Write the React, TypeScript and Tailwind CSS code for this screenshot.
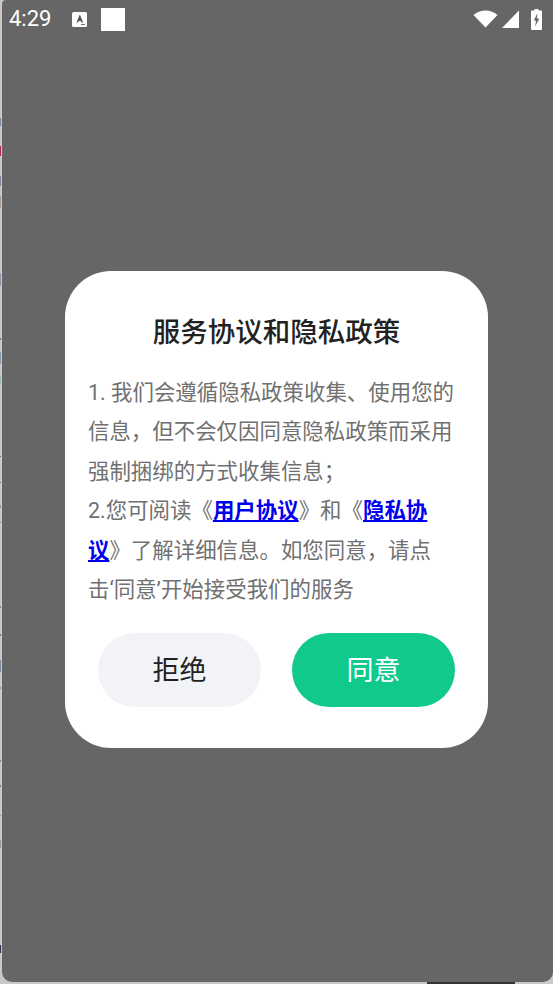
const specks = [
  { top: 118, h: 8, color: "#7d8ba0" },
  { top: 146, h: 10, color: "#b0274d" },
  { top: 176, h: 10, color: "#8a889c" },
  { top: 196, h: 12, color: "#a89c90" },
  { top: 273, h: 13, color: "#8d99a8" },
  { top: 338, h: 2, color: "#777777" },
  { top: 352, h: 12, color: "#8a9ab5" },
  { top: 376, h: 8, color: "#a0b5aa" },
  { top: 456, h: 1, color: "#666666" },
  { top: 482, h: 1, color: "#666666" },
  { top: 505, h: 3, color: "#999999" },
  { top: 522, h: 1, color: "#888888" },
  { top: 606, h: 2, color: "#888888" },
  { top: 634, h: 2, color: "#777777" },
  { top: 660, h: 12, color: "#7d8ba0" },
  { top: 687, h: 2, color: "#999999" },
  { top: 760, h: 2, color: "#888888" },
  { top: 785, h: 2, color: "#777777" },
  { top: 815, h: 1, color: "#999999" },
  { top: 840, h: 8, color: "#999999" },
  { top: 945, h: 8, color: "#2d3348" },
];

export default function App() {
  return (
    <div
      className="relative w-[553px] h-[984px] overflow-hidden bg-[#c9c9c9]"
      style={{ fontFamily: 'Roboto, "Noto Sans CJK SC", sans-serif' }}
    >
      {/* things peeking out behind the overlay */}
      {specks.map((s) => (
        <div
          key={s.top}
          className="absolute left-0 w-[1px]"
          style={{ top: s.top, height: s.h, backgroundColor: s.color }}
        />
      ))}
      <div className="absolute bottom-0 left-[427px] w-[88px] h-[2px] bg-[#333333]" />

      <div className="relative ml-[2px] h-[982px] bg-[#666666] rounded-b-[10px] rounded-tl-[4px]">
        {/* status bar */}
        <div className="h-[38px] flex items-center text-white">
          <span className="ml-[7px] w-[42px] text-[22px] leading-none">4:29</span>
          <svg className="ml-[21px]" width="15" height="15" viewBox="0 0 15 15">
            <rect width="15" height="15" rx="1.5" fill="#fff" />
            <path d="M4.5 10.5 7.5 3h0.6l3 7.5H9.5l-.6-1.6H6.6L6 10.5z" fill="#555" />
            <rect x="9" y="12" width="4" height="1" fill="#777" />
          </svg>
          <div className="ml-[14px] w-[24px] h-[23px] bg-white" />
          <div className="ml-auto flex items-center">
            <svg width="25" height="18" viewBox="0 0 25 18">
              <path d="M0.5 5C4 2 8 0.5 12.5 0.5S21 2 24.5 5L12.5 17.5z" fill="#fff" />
            </svg>
            <svg className="ml-[4px]" width="17" height="18" viewBox="0 0 17 18">
              <path d="M17 0.5V18H0z" fill="#fff" />
            </svg>
            <svg className="ml-[12px] mr-[11px]" width="11" height="21" viewBox="0 0 11 21">
              <path
                d="M3.5 0h4v1.5h2.5a1 1 0 0 1 1 1V20a1 1 0 0 1-1 1H1a1 1 0 0 1-1-1V2.500a1 1 0 0 1 1-1h2.500z"
                fill="#fff"
              />
              <path d="M6.500 4 2.800 11.500h2.200L4.200 17.500 8.300 9.500H5.900z" fill="#666" />
            </svg>
          </div>
        </div>

        {/* dialog */}
        <div className="ml-[63px] mt-[233px] w-[423px] h-[477px] bg-white rounded-[46px] pt-[42px]">
          <h1 className="text-center text-[27.5px] leading-[40px] font-medium text-[#222222]">
            服务协议和隐私政策
          </h1>
          <p className="mt-[20px] ml-[23px] w-[368px] text-[21.45px] leading-[39.4px] text-[#707070]">
            1. 我们会遵循隐私政策收集、使用您的信息，但不会仅因同意隐私政策而采用强制捆绑的方式收集信息；
            <br />
            2.您可阅读《
            <a className="font-bold text-[#0000ee] underline">用户协议</a>
            》和《
            <a className="font-bold text-[#0000ee] underline">隐私协议</a>
            》了解详细信息。如您同意，请点击‘同意’开始接受我们的服务
          </p>
          <div className="mt-[24px] ml-[33px] flex gap-[31px]">
            <button className="w-[163px] h-[74px] pt-[2px] rounded-full bg-[#f2f3f7] text-[27px] text-[#222222]">
              拒绝
            </button>
            <button className="w-[163px] h-[74px] pt-[2px] rounded-full bg-[#11c98b] text-[27px] text-white">
              同意
            </button>
          </div>
        </div>
      </div>
    </div>
  );
}
